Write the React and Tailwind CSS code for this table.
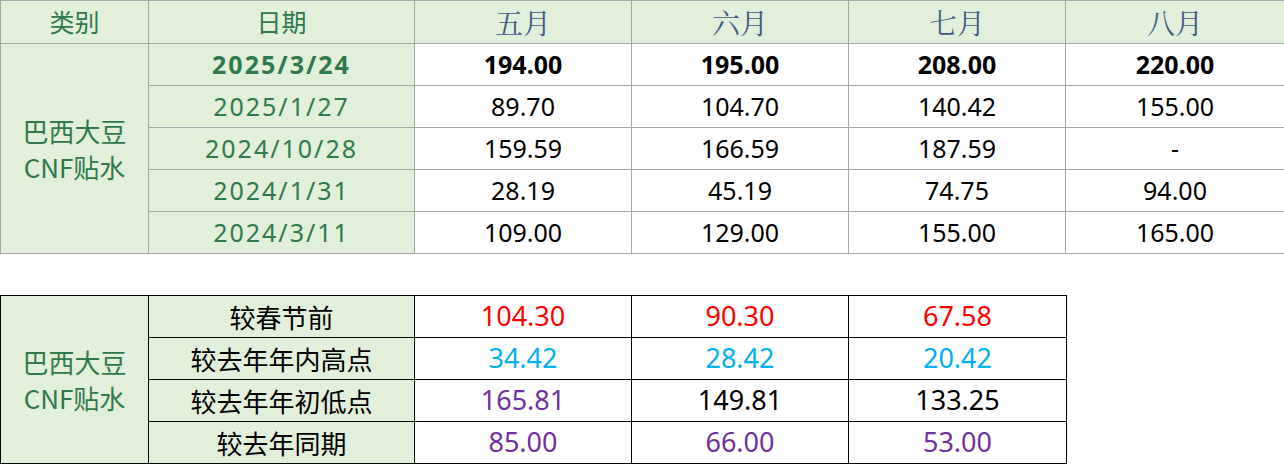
import React from 'react';

const CJK = { fontFamily: '"Noto Sans CJK SC", "Noto Sans", sans-serif' };
const NUM = { fontFamily: '"Noto Sans", "Noto Sans CJK SC", sans-serif' };
const SERIF = { fontFamily: '"Noto Serif CJK SC", "Noto Sans CJK SC", serif' };

const MONTHS = ['五月', '六月', '七月', '八月'];

const TOP_ROWS = [
  { date: '2025/3/24', vals: ['194.00', '195.00', '208.00', '220.00'], bold: true },
  { date: '2025/1/27', vals: ['89.70', '104.70', '140.42', '155.00'] },
  { date: '2024/10/28', vals: ['159.59', '166.59', '187.59', '-'] },
  { date: '2024/1/31', vals: ['28.19', '45.19', '74.75', '94.00'] },
  { date: '2024/3/11', vals: ['109.00', '129.00', '155.00', '165.00'] },
];

const RED = 'text-[#ff0000]';
const BLUE = 'text-[#00b0f0]';
const PURPLE = 'text-[#7030a0]';
const BLACK = 'text-black';

const BOTTOM_ROWS = [
  { label: '较春节前', vals: [['104.30', RED], ['90.30', RED], ['67.58', RED]] },
  { label: '较去年年内高点', vals: [['34.42', BLUE], ['28.42', BLUE], ['20.42', BLUE]] },
  { label: '较去年年初低点', vals: [['165.81', PURPLE], ['149.81', BLACK], ['133.25', BLACK]] },
  { label: '较去年同期', vals: [['85.00', PURPLE], ['66.00', PURPLE], ['53.00', PURPLE]] },
];

function Category() {
  return (
    <div className="text-[26px] leading-[36px] text-[#2f7a4c]" style={CJK}>
      <div>巴西大豆</div>
      <div>CNF贴水</div>
    </div>
  );
}

export default function App() {
  return (
    <div className="w-[1284px] h-[465px] bg-white overflow-hidden">
      {/* top table */}
      <table className="table-fixed border-collapse w-[1284px]">
        <colgroup>
          <col className="w-[148px]" />
          <col className="w-[266px]" />
          <col className="w-[217px]" />
          <col className="w-[217px]" />
          <col className="w-[217px]" />
          <col className="w-[219px]" />
        </colgroup>
        <tbody>
          <tr className="h-[43px] bg-[#e2efda]">
            <td className="border border-[#a6a6a6] text-center text-[25px] text-[#2f7a4c] p-0" style={CJK}>类别</td>
            <td className="border border-[#a6a6a6] text-center text-[25px] text-[#2f7a4c] p-0" style={CJK}>日期</td>
            {MONTHS.map(m => (
              <td key={m} className="border border-[#a6a6a6] text-center text-[28px] leading-[40px] text-[#3f5a86] p-0" style={SERIF}>{m}</td>
            ))}
          </tr>
          {TOP_ROWS.map((r, i) => (
            <tr key={r.date} className="h-[42px]">
              {i === 0 && (
                <td rowSpan={5} className="border border-[#a6a6a6] bg-[#e2efda] text-center p-0">
                  <Category />
                </td>
              )}
              <td className={`border border-[#a6a6a6] bg-[#e2efda] text-center text-[25px] tracking-[2px] text-[#2f7a4c] p-0 ${r.bold ? 'font-bold' : ''}`} style={NUM}>
                {r.date}
              </td>
              {r.vals.map((v, j) => (
                <td key={j} className={`border border-[#a6a6a6] text-center text-[25px] text-black p-0 ${r.bold ? 'font-bold' : ''}`} style={NUM}>
                  {v}
                </td>
              ))}
            </tr>
          ))}
        </tbody>
      </table>

      {/* bottom table */}
      <table className="table-fixed border-collapse w-[1066px] mt-[41px]">
        <colgroup>
          <col className="w-[148px]" />
          <col className="w-[266px]" />
          <col className="w-[217px]" />
          <col className="w-[217px]" />
          <col className="w-[218px]" />
        </colgroup>
        <tbody>
          {BOTTOM_ROWS.map((r, i) => (
            <tr key={r.label} className="h-[42px]">
              {i === 0 && (
                <td rowSpan={4} className="border border-black bg-[#e2efda] text-center p-0">
                  <Category />
                </td>
              )}
              <td className="border border-black bg-[#e2efda] text-center text-[26px] text-black p-0" style={CJK}>
                {r.label}
              </td>
              {r.vals.map(([v, c], j) => (
                <td key={j} className={`border border-black text-center text-[27px] p-0 ${c}`} style={NUM}>
                  {v}
                </td>
              ))}
            </tr>
          ))}
        </tbody>
      </table>
    </div>
  );
}
